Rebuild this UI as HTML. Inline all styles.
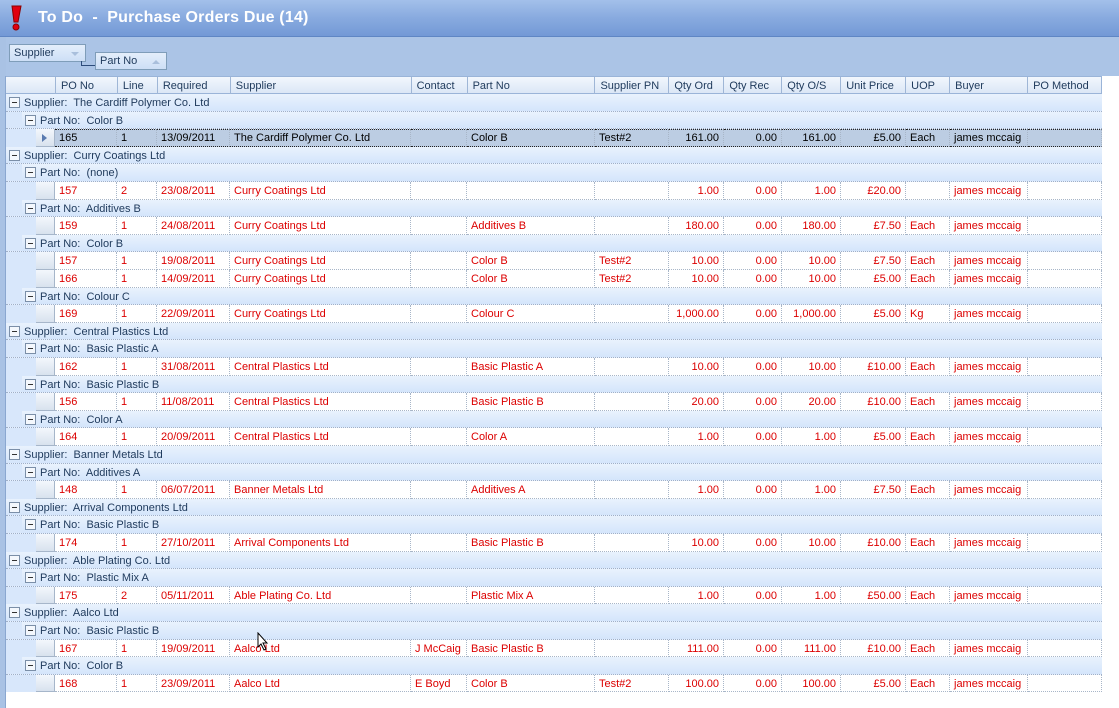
<!DOCTYPE html>
<html><head><meta charset="utf-8"><style>
*{margin:0;padding:0;box-sizing:border-box}
body{width:1119px;height:708px;overflow:hidden;background:#fff;font-family:"Liberation Sans",Arial,sans-serif;font-size:11px;position:relative}
.title{position:absolute;left:0;top:0;width:1119px;height:37px;background:linear-gradient(#a3c0ea,#88aadf 50%,#7399d6);border-bottom:1px solid #5f86c4}
.title span{position:absolute;left:38px;top:9px;color:#fff;font-weight:bold;font-size:16px;letter-spacing:0.2px}
.panel{position:absolute;left:0;top:37px;width:1119px;height:39px;background:#abc4e6;border-left:6px solid #a9c2e4}
.btn{position:absolute;height:18px;border:1px solid #7f9db9;background:linear-gradient(#e4eefb,#cddff6);font-size:11px;padding:2px 4px;color:#1e395b}
.btn i{position:absolute;right:6px;top:7px;width:0;height:0;border-left:4px solid transparent;border-right:4px solid transparent}
.hdr{position:absolute;left:6px;top:76px;width:1096px;height:18px;background:linear-gradient(#f2f7fd,#dbe7f6);border:1px solid #9ab4d8;border-left:none;display:flex}
.hdr div{height:17px;border-left:1px solid #9fb6d6;padding:3px 5px 0;color:#1e395b;white-space:nowrap;overflow:hidden}
.r{position:absolute;left:6px;width:1096px;height:17.6px;display:flex;white-space:nowrap}
.s,.p{background:linear-gradient(#e9f2fd,#d4e5fb);border-bottom:1px dotted #a0b0c8;color:#1e395b}
.s .t,.p .t{padding:3px 0 0 4px}
.box{width:11px;height:11px;border:1px solid #7b8fa8;background:#f4f8fd;margin:3px 0 0 3px;position:relative;flex:none}
.box:after{content:"";position:absolute;left:2px;top:4px;width:5px;height:1px;background:#333}
.ind{background:#d8e7fb;flex:none}
.rb{width:19px;flex:none;background:linear-gradient(#f3f7fc,#d8e2ee);border-right:1px solid #a6b6ca;border-bottom:1px solid #a6b6ca;position:relative}
.d .c{border-right:1px dotted #a8b6c8;border-bottom:1px dotted #a8b6c8;padding:3px 4px 0;color:#dc0000;background:#fff;overflow:hidden;flex:none}
.d .R{text-align:right}
.sel .c{background:#bccde3;color:#000;border-bottom:1px dotted #222;border-top:1px dotted #222;padding-top:2px}
.w1{width:62px}.w2{width:40px}.w3{width:73px}.w4{width:181px}.w5{width:56px}.w6{width:128px}.w7{width:74px}.w8{width:55px}.w9{width:58px}.w10{width:59px}.w11{width:65px}.w12{width:44px}.w13{width:78px}.w14{width:74px}
</style></head><body>
<div class="title">
<svg style="position:absolute;left:9px;top:5px" width="14" height="26" viewBox="0 0 14 26"><path d="M3 1 L12 1 L9 17 L5 17 Z" fill="#e00010" stroke="#8a0000" stroke-width="1"/><circle cx="7" cy="22" r="3" fill="#e00010" stroke="#8a0000"/></svg>
<span>To Do &nbsp;- &nbsp;Purchase Orders Due (14)</span></div>
<div class="panel"></div>
<div class="btn" style="left:9px;top:44px;width:77px">Supplier<i style="border-top:4px solid #a9bfdc"></i></div>
<div style="position:absolute;left:81px;top:61px;width:14px;height:5px;border-left:1px solid #2c4b7a;border-bottom:1px solid #2c4b7a"></div>
<div class="btn" style="left:95px;top:52px;width:72px">Part No<i style="border-bottom:4px solid #a9bfdc"></i></div>
<div class="hdr">
<div style="width:49px;border-left:none"></div><div class="w1">PO No</div><div class="w2">Line</div><div class="w3">Required</div><div class="w4">Supplier</div><div class="w5">Contact</div><div class="w6">Part No</div><div class="w7">Supplier PN</div><div class="w8">Qty Ord</div><div class="w9">Qty Rec</div><div class="w10">Qty O/S</div><div class="w11">Unit Price</div><div class="w12">UOP</div><div class="w13">Buyer</div><div class="w14">PO Method</div>
</div>

<div class="r s" style="top:94px"><div class="box"></div><div class="t">Supplier:&nbsp; The Cardiff Polymer Co. Ltd</div></div>
<div class="r p" style="top:111.6px"><div class="ind" style="width:16px;height:100%"></div><div class="box"></div><div class="t">Part No:&nbsp; Color B</div></div>
<div class="r d sel" style="top:129.2px"><div class="ind" style="width:30px"></div><div class="rb"><span style="position:absolute;left:6px;top:5px;border-left:5px solid #5a7bb0;border-top:4px solid transparent;border-bottom:4px solid transparent"></span></div><div class="c w1">165</div><div class="c w2">1</div><div class="c w3">13/09/2011</div><div class="c w4">The Cardiff Polymer Co. Ltd</div><div class="c w5"></div><div class="c w6">Color B</div><div class="c w7">Test#2</div><div class="c w8 R">161.00</div><div class="c w9 R">0.00</div><div class="c w10 R">161.00</div><div class="c w11 R">£5.00</div><div class="c w12">Each</div><div class="c w13">james mccaig</div><div class="c w14"></div></div>

<div class="r s" style="top:146.8px"><div class="box"></div><div class="t">Supplier:&nbsp; Curry Coatings Ltd</div></div>
<div class="r p" style="top:164.4px"><div class="ind" style="width:16px;height:100%"></div><div class="box"></div><div class="t">Part No:&nbsp; (none)</div></div>
<div class="r d" style="top:182px"><div class="ind" style="width:30px"></div><div class="rb"></div><div class="c w1">157</div><div class="c w2">2</div><div class="c w3">23/08/2011</div><div class="c w4">Curry Coatings Ltd</div><div class="c w5"></div><div class="c w6"></div><div class="c w7"></div><div class="c w8 R">1.00</div><div class="c w9 R">0.00</div><div class="c w10 R">1.00</div><div class="c w11 R">£20.00</div><div class="c w12"></div><div class="c w13">james mccaig</div><div class="c w14"></div></div>
<div class="r p" style="top:199.6px"><div class="ind" style="width:16px;height:100%"></div><div class="box"></div><div class="t">Part No:&nbsp; Additives B</div></div>
<div class="r d" style="top:217.2px"><div class="ind" style="width:30px"></div><div class="rb"></div><div class="c w1">159</div><div class="c w2">1</div><div class="c w3">24/08/2011</div><div class="c w4">Curry Coatings Ltd</div><div class="c w5"></div><div class="c w6">Additives B</div><div class="c w7"></div><div class="c w8 R">180.00</div><div class="c w9 R">0.00</div><div class="c w10 R">180.00</div><div class="c w11 R">£7.50</div><div class="c w12">Each</div><div class="c w13">james mccaig</div><div class="c w14"></div></div>
<div class="r p" style="top:234.8px"><div class="ind" style="width:16px;height:100%"></div><div class="box"></div><div class="t">Part No:&nbsp; Color B</div></div>
<div class="r d" style="top:252.4px"><div class="ind" style="width:30px"></div><div class="rb"></div><div class="c w1">157</div><div class="c w2">1</div><div class="c w3">19/08/2011</div><div class="c w4">Curry Coatings Ltd</div><div class="c w5"></div><div class="c w6">Color B</div><div class="c w7">Test#2</div><div class="c w8 R">10.00</div><div class="c w9 R">0.00</div><div class="c w10 R">10.00</div><div class="c w11 R">£7.50</div><div class="c w12">Each</div><div class="c w13">james mccaig</div><div class="c w14"></div></div>
<div class="r d" style="top:270px"><div class="ind" style="width:30px"></div><div class="rb"></div><div class="c w1">166</div><div class="c w2">1</div><div class="c w3">14/09/2011</div><div class="c w4">Curry Coatings Ltd</div><div class="c w5"></div><div class="c w6">Color B</div><div class="c w7">Test#2</div><div class="c w8 R">10.00</div><div class="c w9 R">0.00</div><div class="c w10 R">10.00</div><div class="c w11 R">£5.00</div><div class="c w12">Each</div><div class="c w13">james mccaig</div><div class="c w14"></div></div>
<div class="r p" style="top:287.6px"><div class="ind" style="width:16px;height:100%"></div><div class="box"></div><div class="t">Part No:&nbsp; Colour C</div></div>
<div class="r d" style="top:305.2px"><div class="ind" style="width:30px"></div><div class="rb"></div><div class="c w1">169</div><div class="c w2">1</div><div class="c w3">22/09/2011</div><div class="c w4">Curry Coatings Ltd</div><div class="c w5"></div><div class="c w6">Colour C</div><div class="c w7"></div><div class="c w8 R">1,000.00</div><div class="c w9 R">0.00</div><div class="c w10 R">1,000.00</div><div class="c w11 R">£5.00</div><div class="c w12">Kg</div><div class="c w13">james mccaig</div><div class="c w14"></div></div>

<div class="r s" style="top:322.8px"><div class="box"></div><div class="t">Supplier:&nbsp; Central Plastics Ltd</div></div>
<div class="r p" style="top:340.4px"><div class="ind" style="width:16px;height:100%"></div><div class="box"></div><div class="t">Part No:&nbsp; Basic Plastic A</div></div>
<div class="r d" style="top:358px"><div class="ind" style="width:30px"></div><div class="rb"></div><div class="c w1">162</div><div class="c w2">1</div><div class="c w3">31/08/2011</div><div class="c w4">Central Plastics Ltd</div><div class="c w5"></div><div class="c w6">Basic Plastic A</div><div class="c w7"></div><div class="c w8 R">10.00</div><div class="c w9 R">0.00</div><div class="c w10 R">10.00</div><div class="c w11 R">£10.00</div><div class="c w12">Each</div><div class="c w13">james mccaig</div><div class="c w14"></div></div>
<div class="r p" style="top:375.6px"><div class="ind" style="width:16px;height:100%"></div><div class="box"></div><div class="t">Part No:&nbsp; Basic Plastic B</div></div>
<div class="r d" style="top:393.2px"><div class="ind" style="width:30px"></div><div class="rb"></div><div class="c w1">156</div><div class="c w2">1</div><div class="c w3">11/08/2011</div><div class="c w4">Central Plastics Ltd</div><div class="c w5"></div><div class="c w6">Basic Plastic B</div><div class="c w7"></div><div class="c w8 R">20.00</div><div class="c w9 R">0.00</div><div class="c w10 R">20.00</div><div class="c w11 R">£10.00</div><div class="c w12">Each</div><div class="c w13">james mccaig</div><div class="c w14"></div></div>
<div class="r p" style="top:410.8px"><div class="ind" style="width:16px;height:100%"></div><div class="box"></div><div class="t">Part No:&nbsp; Color A</div></div>
<div class="r d" style="top:428.4px"><div class="ind" style="width:30px"></div><div class="rb"></div><div class="c w1">164</div><div class="c w2">1</div><div class="c w3">20/09/2011</div><div class="c w4">Central Plastics Ltd</div><div class="c w5"></div><div class="c w6">Color A</div><div class="c w7"></div><div class="c w8 R">1.00</div><div class="c w9 R">0.00</div><div class="c w10 R">1.00</div><div class="c w11 R">£5.00</div><div class="c w12">Each</div><div class="c w13">james mccaig</div><div class="c w14"></div></div>

<div class="r s" style="top:446px"><div class="box"></div><div class="t">Supplier:&nbsp; Banner Metals Ltd</div></div>
<div class="r p" style="top:463.6px"><div class="ind" style="width:16px;height:100%"></div><div class="box"></div><div class="t">Part No:&nbsp; Additives A</div></div>
<div class="r d" style="top:481.2px"><div class="ind" style="width:30px"></div><div class="rb"></div><div class="c w1">148</div><div class="c w2">1</div><div class="c w3">06/07/2011</div><div class="c w4">Banner Metals Ltd</div><div class="c w5"></div><div class="c w6">Additives A</div><div class="c w7"></div><div class="c w8 R">1.00</div><div class="c w9 R">0.00</div><div class="c w10 R">1.00</div><div class="c w11 R">£7.50</div><div class="c w12">Each</div><div class="c w13">james mccaig</div><div class="c w14"></div></div>

<div class="r s" style="top:498.8px"><div class="box"></div><div class="t">Supplier:&nbsp; Arrival Components Ltd</div></div>
<div class="r p" style="top:516.4px"><div class="ind" style="width:16px;height:100%"></div><div class="box"></div><div class="t">Part No:&nbsp; Basic Plastic B</div></div>
<div class="r d" style="top:534px"><div class="ind" style="width:30px"></div><div class="rb"></div><div class="c w1">174</div><div class="c w2">1</div><div class="c w3">27/10/2011</div><div class="c w4">Arrival Components Ltd</div><div class="c w5"></div><div class="c w6">Basic Plastic B</div><div class="c w7"></div><div class="c w8 R">10.00</div><div class="c w9 R">0.00</div><div class="c w10 R">10.00</div><div class="c w11 R">£10.00</div><div class="c w12">Each</div><div class="c w13">james mccaig</div><div class="c w14"></div></div>

<div class="r s" style="top:551.6px"><div class="box"></div><div class="t">Supplier:&nbsp; Able Plating Co. Ltd</div></div>
<div class="r p" style="top:569.2px"><div class="ind" style="width:16px;height:100%"></div><div class="box"></div><div class="t">Part No:&nbsp; Plastic Mix A</div></div>
<div class="r d" style="top:586.8px"><div class="ind" style="width:30px"></div><div class="rb"></div><div class="c w1">175</div><div class="c w2">2</div><div class="c w3">05/11/2011</div><div class="c w4">Able Plating Co. Ltd</div><div class="c w5"></div><div class="c w6">Plastic Mix A</div><div class="c w7"></div><div class="c w8 R">1.00</div><div class="c w9 R">0.00</div><div class="c w10 R">1.00</div><div class="c w11 R">£50.00</div><div class="c w12">Each</div><div class="c w13">james mccaig</div><div class="c w14"></div></div>

<div class="r s" style="top:604.4px"><div class="box"></div><div class="t">Supplier:&nbsp; Aalco Ltd</div></div>
<div class="r p" style="top:622px"><div class="ind" style="width:16px;height:100%"></div><div class="box"></div><div class="t">Part No:&nbsp; Basic Plastic B</div></div>
<div class="r d" style="top:639.6px"><div class="ind" style="width:30px"></div><div class="rb"></div><div class="c w1">167</div><div class="c w2">1</div><div class="c w3">19/09/2011</div><div class="c w4">Aalco Ltd</div><div class="c w5">J McCaig</div><div class="c w6">Basic Plastic B</div><div class="c w7"></div><div class="c w8 R">111.00</div><div class="c w9 R">0.00</div><div class="c w10 R">111.00</div><div class="c w11 R">£10.00</div><div class="c w12">Each</div><div class="c w13">james mccaig</div><div class="c w14"></div></div>
<div class="r p" style="top:657.2px"><div class="ind" style="width:16px;height:100%"></div><div class="box"></div><div class="t">Part No:&nbsp; Color B</div></div>
<div class="r d" style="top:674.8px"><div class="ind" style="width:30px"></div><div class="rb"></div><div class="c w1">168</div><div class="c w2">1</div><div class="c w3">23/09/2011</div><div class="c w4">Aalco Ltd</div><div class="c w5">E Boyd</div><div class="c w6">Color B</div><div class="c w7">Test#2</div><div class="c w8 R">100.00</div><div class="c w9 R">0.00</div><div class="c w10 R">100.00</div><div class="c w11 R">£5.00</div><div class="c w12">Each</div><div class="c w13">james mccaig</div><div class="c w14"></div></div>

<div style="position:absolute;left:0;top:37px;width:6px;height:671px;background:#a9c2e4"></div>
<div style="position:absolute;left:5px;top:76px;width:1px;height:632px;background:#8aa7d0"></div>
<svg style="position:absolute;left:257px;top:632px" width="12" height="19" viewBox="0 0 12 19"><path d="M1 1 L1 15 L4 12 L7 18 L9 17 L6 11 L10 11 Z" fill="#fff" stroke="#000" stroke-width="1"/></svg>
</body></html>
